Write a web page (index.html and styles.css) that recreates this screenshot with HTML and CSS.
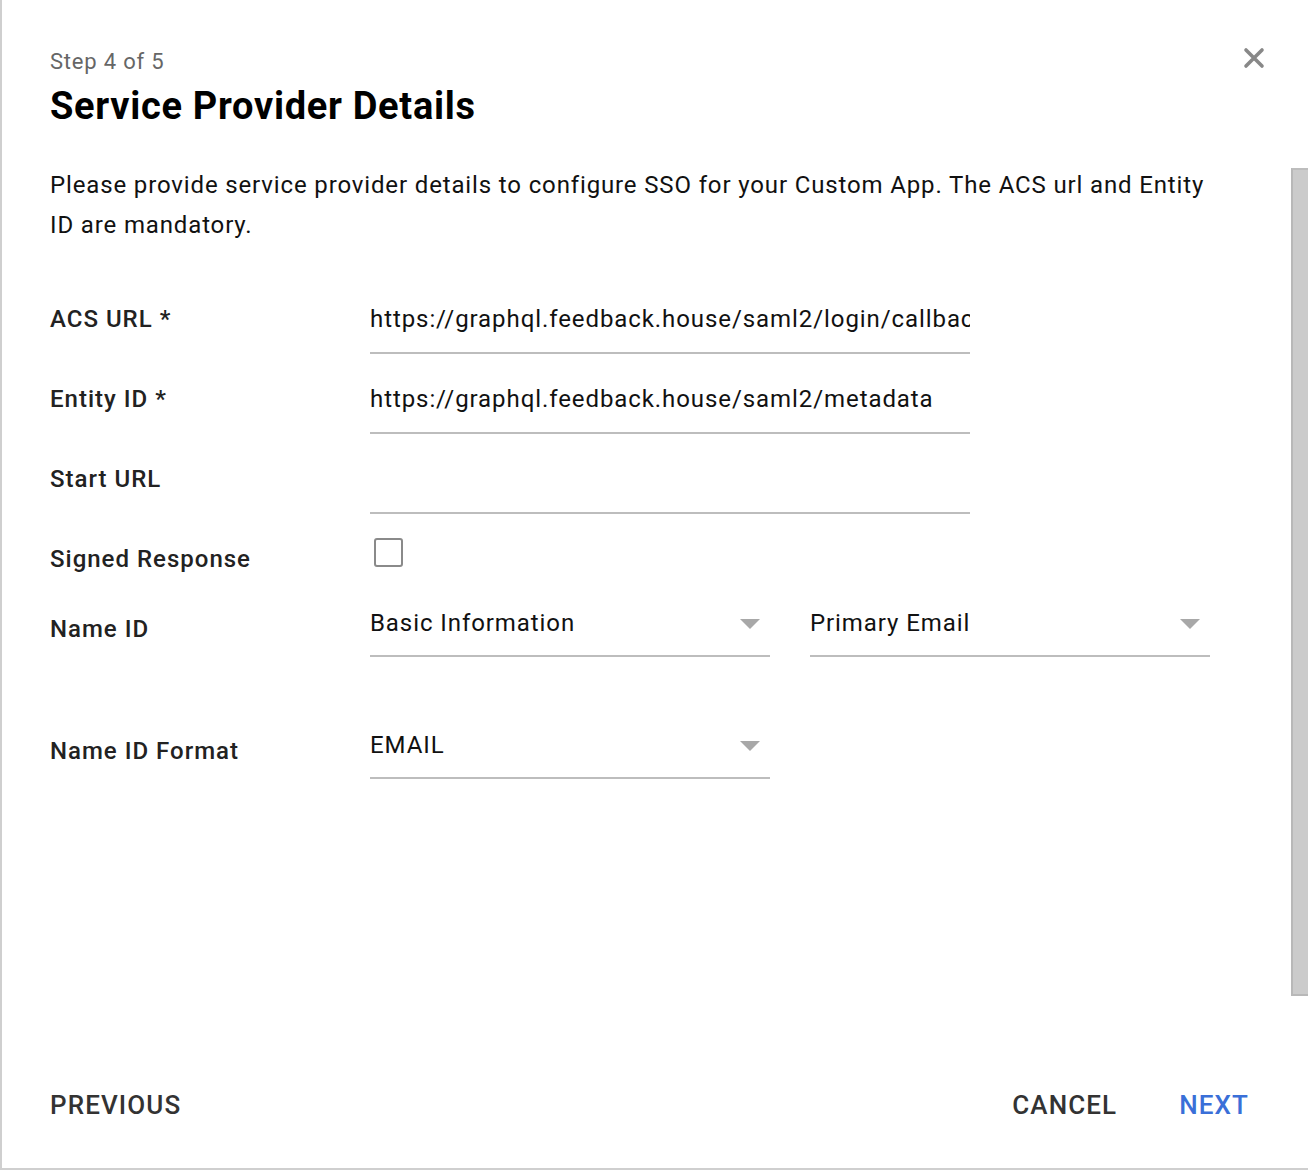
FILE: index.html
```html
<!DOCTYPE html>
<html>
<head>
<meta charset="utf-8">
<link rel="stylesheet" href="styles.css">
</head>
<body>
<div class="dialog">
  <div class="close" aria-label="Close">
    <svg width="22" height="22" viewBox="0 0 22 22"><path d="M3 3 L19 19 M19 3 L3 19" stroke="#888" stroke-width="3.6" stroke-linecap="round"/></svg>
  </div>
  <div class="scrollbar"></div>
  <div class="header">
    <div class="step">Step 4 of 5</div>
    <h1 class="title">Service Provider Details</h1>
  </div>
  <p class="desc">Please provide service provider details to configure SSO for your Custom App. The ACS url and Entity ID are mandatory.</p>
  <div class="form">
    <div class="row r1">
      <div class="label">ACS URL *</div>
      <div class="field input"><span class="val clip">https://graphql.feedback.house/saml2/login/callback</span></div>
    </div>
    <div class="row r2">
      <div class="label">Entity ID *</div>
      <div class="field input"><span class="val">https://graphql.feedback.house/saml2/metadata</span></div>
    </div>
    <div class="row r3">
      <div class="label">Start URL</div>
      <div class="field input"><span class="val">&nbsp;</span></div>
    </div>
    <div class="row r4">
      <div class="label">Signed Response</div>
      <div class="checkbox"></div>
    </div>
    <div class="row r5">
      <div class="label drop-label">Name ID</div>
      <div class="field select"><span class="val">Basic Information</span><span class="arrow"></span></div>
      <div class="field select second"><span class="val">Primary Email</span><span class="arrow"></span></div>
    </div>
    <div class="row r6">
      <div class="label drop-label">Name ID Format</div>
      <div class="field select"><span class="val">EMAIL</span><span class="arrow"></span></div>
    </div>
  </div>
  <div class="footer">
    <div class="btn prev">PREVIOUS</div>
    <div class="spacer"></div>
    <div class="btn cancel">CANCEL</div>
    <div class="btn next">NEXT</div>
  </div>
</div>
</body>
</html>
```

FILE: styles.css
```css
html, body {
  margin: 0;
  padding: 0;
  background: #fff;
}
body {
  font-family: Roboto, "Liberation Sans", Arial, sans-serif;
  color: #111;
}
.dialog {
  position: relative;
  box-sizing: border-box;
  width: 1308px;
  height: 1170px;
  border-left: 2px solid #cfcfcf;
  border-bottom: 2px solid #cfcfcf;
  padding-left: 48px;
  display: flex;
  flex-direction: column;
}
.close {
  position: absolute;
  left: 1241px;
  top: 47px;
  width: 22px;
  height: 22px;
}
.close svg { display: block; }
.scrollbar {
  position: absolute;
  left: 1289px;
  top: 168px;
  width: 19px;
  height: 828px;
  box-sizing: border-box;
  background: #cbcbcb;
  border-left: 2px solid #b8b8b8;
  border-top: 2px solid #bdbdbd;
  border-bottom: 2px solid #b8b8b8;
}
.header {
  padding-top: 49px;
}
.step {
  font-size: 22px;
  line-height: 26px;
  color: #666;
  letter-spacing: 0.8px;
}
.title {
  margin: 9px 0 0;
  font-size: 38px;
  line-height: 44px;
  font-weight: 700;
  color: #000;
  letter-spacing: 0.7px;
}
.desc {
  margin: 37px 0 0;
  width: 1166px;
  font-size: 24px;
  line-height: 40px;
  color: #111;
  letter-spacing: 0.86px;
}
.form {
  margin-top: 58px;
  display: flex;
  flex-direction: column;
}
.row {
  display: flex;
  align-items: flex-start;
}
.r2, .r3 { margin-top: 29px; }
.r4 { margin-top: 29px; }
.r5 { margin-top: 32px; }
.r6 { margin-top: 72px; }
.label {
  width: 320px;
  flex: none;
  font-size: 24px;
  line-height: 32px;
  font-weight: 500;
  color: #222;
  letter-spacing: 1px;
}
.drop-label { padding-top: 6px; }
.field {
  box-sizing: border-box;
  border-bottom: 2px solid #bdbdbd;
  font-size: 24px;
  line-height: 32px;
  color: #111;
  display: flex;
  align-items: center;
  overflow: hidden;
  white-space: nowrap;
  letter-spacing: 0.92px;
}
.input {
  width: 600px;
  padding-bottom: 17px;
}
.select {
  width: 400px;
  padding-bottom: 16px;
  padding-right: 10px;
}
.select .val { flex: 1; }
.second { margin-left: 40px; }
.arrow {
  width: 0;
  height: 0;
  border-left: 10px solid transparent;
  border-right: 10px solid transparent;
  border-top: 10px solid #a8a8a8;
  margin-top: 2px;
}
.checkbox {
  box-sizing: border-box;
  width: 29px;
  height: 29px;
  margin-left: 4px;
  margin-top: -5px;
  border: 2px solid #8a8a8a;
  border-radius: 3px;
}
.footer {
  margin-top: auto;
  margin-bottom: 47px;
  display: flex;
  align-items: center;
  padding-right: 59px;
}
.spacer { flex: 1; }
.btn {
  font-size: 26px;
  line-height: 32px;
  font-weight: 500;
  color: #333;
  letter-spacing: 1.1px;
}
.next {
  margin-left: 62px;
  color: #3a6fd8;
}
```
